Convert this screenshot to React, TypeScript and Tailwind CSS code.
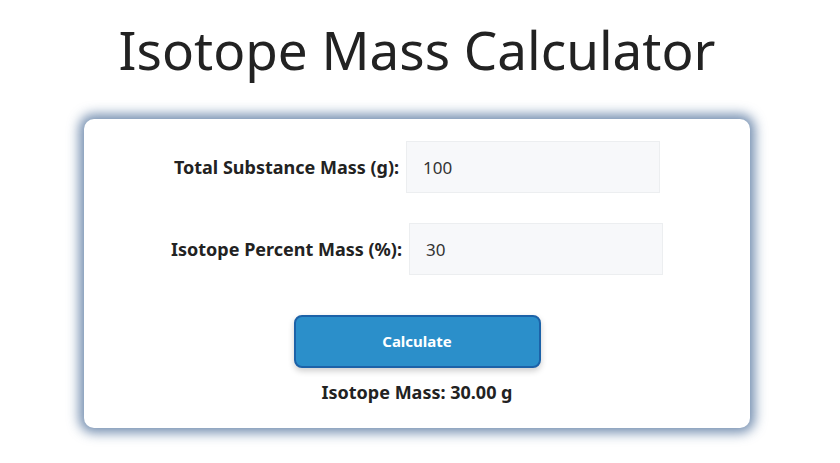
export default function App() {
  return (
    <div
      className="min-h-[463px] w-full bg-white flex flex-col items-center pr-[6px]"
      style={{ fontFamily: '"Noto Sans", "Open Sans", sans-serif' }}
    >
      <h1 className="mt-[14px] text-[53px] leading-[72px] font-normal text-[#222]">
        Isotope Mass Calculator
      </h1>

      <div className="mt-[33px] w-[666px] rounded-[10px] bg-white shadow-[0_0_12px_5px_rgba(45,85,135,0.65)] pt-[22px] pb-[22px] flex flex-col items-center">
        <div className="flex items-center gap-[7px]">
          <label className="text-[18px] font-bold text-[#222]">Total Substance Mass (g):</label>
          <input
            defaultValue="100"
            className="w-[254px] h-[52px] bg-[#f7f8fa] border border-[#eceef0] px-[16px] text-[17px] text-[#333] outline-none"
          />
        </div>

        <div className="mt-[30px] flex items-center gap-[7px]">
          <label className="text-[18px] font-bold text-[#222]">Isotope Percent Mass (%):</label>
          <input
            defaultValue="30"
            className="w-[254px] h-[52px] bg-[#f7f8fa] border border-[#eceef0] px-[16px] text-[17px] text-[#333] outline-none"
          />
        </div>

        <button className="mt-[40px] w-[247px] h-[53px] rounded-[8px] bg-[#2b8fca] border-2 border-[#1c62a8] text-white text-[15px] font-bold shadow-[0_3px_6px_rgba(0,0,0,0.2)]">
          Calculate
        </button>

        <p className="mt-[11px] text-[18px] font-bold text-[#222]">Isotope Mass: 30.00 g</p>
      </div>
    </div>
  );
}
